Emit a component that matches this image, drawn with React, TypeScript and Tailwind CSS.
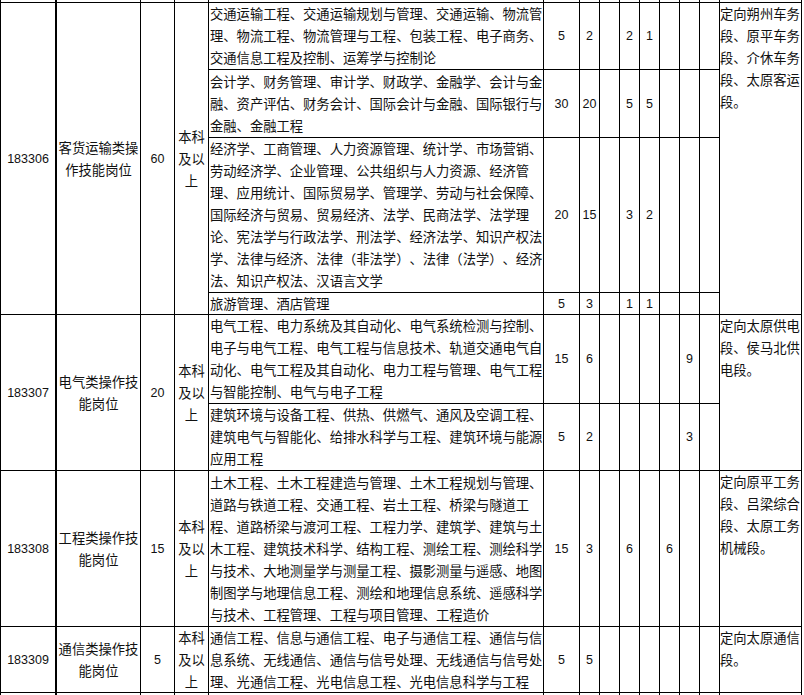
import React from "react";

type Row = { lines: string[]; nums: string[] };
type Group = {
  id: string;
  name: string[];
  count: string;
  remark: string[];
  rows: Row[];
};

const groups: Group[] = [
  {
    id: "183306",
    name: ["客货运输类操", "作技能岗位"],
    count: "60",
    remark: ["定向朔州车务", "段、原平车务", "段、介休车务", "段、太原客运", "段。"],
    rows: [
      {
        lines: [
          "交通运输工程、交通运输规划与管理、交通运输、物流管",
          "理、物流工程、物流管理与工程、包装工程、电子商务、",
          "交通信息工程及控制、运筹学与控制论",
        ],
        nums: ["5", "2", "", "2", "1", "", "", ""],
      },
      {
        lines: [
          "会计学、财务管理、审计学、财政学、金融学、会计与金",
          "融、资产评估、财务会计、国际会计与金融、国际银行与",
          "金融、金融工程",
        ],
        nums: ["30", "20", "", "5", "5", "", "", ""],
      },
      {
        lines: [
          "经济学、工商管理、人力资源管理、统计学、市场营销、",
          "劳动经济学、企业管理、公共组织与人力资源、经济管",
          "理、应用统计、国际贸易学、管理学、劳动与社会保障、",
          "国际经济与贸易、贸易经济、法学、民商法学、法学理",
          "论、宪法学与行政法学、刑法学、经济法学、知识产权法",
          "学、法律与经济、法律（非法学）、法律（法学）、经济",
          "法、知识产权法、汉语言文学",
        ],
        nums: ["20", "15", "", "3", "2", "", "", ""],
      },
      {
        lines: ["旅游管理、酒店管理"],
        nums: ["5", "3", "", "1", "1", "", "", ""],
      },
    ],
  },
  {
    id: "183307",
    name: ["电气类操作技", "能岗位"],
    count: "20",
    remark: ["定向太原供电", "段、侯马北供", "电段。"],
    rows: [
      {
        lines: [
          "电气工程、电力系统及其自动化、电气系统检测与控制、",
          "电子与电气工程、电气工程与信息技术、轨道交通电气自",
          "动化、电气工程及其自动化、电力工程与管理、电气工程",
          "与智能控制、电气与电子工程",
        ],
        nums: ["15", "6", "", "", "", "", "9", ""],
      },
      {
        lines: [
          "建筑环境与设备工程、供热、供燃气、通风及空调工程、",
          "建筑电气与智能化、给排水科学与工程、建筑环境与能源",
          "应用工程",
        ],
        nums: ["5", "2", "", "", "", "", "3", ""],
      },
    ],
  },
  {
    id: "183308",
    name: ["工程类操作技", "能岗位"],
    count: "15",
    remark: ["定向原平工务", "段、吕梁综合", "段、太原工务", "机械段。"],
    rows: [
      {
        lines: [
          "土木工程、土木工程建造与管理、土木工程规划与管理、",
          "道路与铁道工程、交通工程、岩土工程、桥梁与隧道工",
          "程、道路桥梁与渡河工程、工程力学、建筑学、建筑与土",
          "木工程、建筑技术科学、结构工程、测绘工程、测绘科学",
          "与技术、大地测量学与测量工程、摄影测量与遥感、地图",
          "制图学与地理信息工程、测绘和地理信息系统、遥感科学",
          "与技术、工程管理、工程与项目管理、工程造价",
        ],
        nums: ["15", "3", "", "6", "", "6", "", ""],
      },
    ],
  },
  {
    id: "183309",
    name: ["通信类操作技", "能岗位"],
    count: "5",
    remark: ["定向太原通信", "段。"],
    rows: [
      {
        lines: [
          "通信工程、信息与通信工程、电子与通信工程、通信与信",
          "息系统、无线通信、通信与信号处理、无线通信与信号处",
          "理、光通信工程、光电信息工程、光电信息科学与工程",
        ],
        nums: ["5", "5", "", "", "", "", "", ""],
      },
    ],
  },
];

const spanClass: Record<number, string> = {
  1: "",
  2: "row-span-2",
  4: "row-span-4",
};

const numCls =
  "bg-white flex items-center justify-center font-['Liberation_Sans',sans-serif] text-[12.5px]";
const centerCls = "bg-white flex flex-col items-center justify-center text-center";

function PhantomRow({ k }: { k: string }) {
  return (
    <>
      {Array.from({ length: 14 }).map((_, i) => (
        <div
          key={k + i}
          className={i === 1 ? "bg-white border-l border-black" : "bg-white"}
        />
      ))}
    </>
  );
}

export default function App() {
  const cells: React.ReactNode[] = [];
  groups.forEach((g) => {
    const sp = spanClass[g.rows.length];
    g.rows.forEach((r, ri) => {
      if (ri === 0) {
        cells.push(
          <div key={g.id + "id"} className={`${centerCls} ${sp} font-['Liberation_Sans',sans-serif] text-[12.5px]`}>
            {g.id}
          </div>,
          <div key={g.id + "nm"} className={`${centerCls} ${sp} border-l border-black`}>
            {g.name.map((l) => (
              <div key={l}>{l}</div>
            ))}
          </div>,
          <div key={g.id + "ct"} className={`${centerCls} ${sp} font-['Liberation_Sans',sans-serif] text-[12.5px]`}>
            {g.count}
          </div>,
          <div key={g.id + "dg"} className={`${centerCls} ${sp}`}>
            <div>本科</div>
            <div>及以</div>
            <div>上</div>
          </div>
        );
      }
      cells.push(
        <div
          key={g.id + ri + "mj"}
          className="bg-white flex flex-col justify-center pl-px whitespace-nowrap overflow-hidden"
        >
          {r.lines.map((l) => (
            <div key={l}>{l}</div>
          ))}
        </div>
      );
      r.nums.forEach((n, ni) => {
        cells.push(
          <div key={g.id + ri + "n" + ni} className={numCls}>
            {n}
          </div>
        );
      });
      if (ri === 0) {
        cells.push(
          <div key={g.id + "rm"} className={`bg-white ${sp} flex flex-col whitespace-nowrap`}>
            {g.remark.map((l) => (
              <div key={l}>{l}</div>
            ))}
          </div>
        );
      }
    });
  });

  return (
    <div className="w-[804px] h-[695px] overflow-hidden bg-white">
      <div className="w-[802px] grid grid-cols-[54px_84px_33px_33px_334px_35px_19px_19px_19px_19px_19px_19px_19px_81px] grid-rows-[2px_66px_67px_154px_21px_88px_66px_155px_65px_20px] gap-px bg-black px-px font-['Noto_Sans_CJK_SC',sans-serif] text-[13.3px] leading-[22px] text-[#111] [text-spacing-trim:space-all]">
        <PhantomRow k="top" />
        {cells}
        <PhantomRow k="bot" />
      </div>
    </div>
  );
}
